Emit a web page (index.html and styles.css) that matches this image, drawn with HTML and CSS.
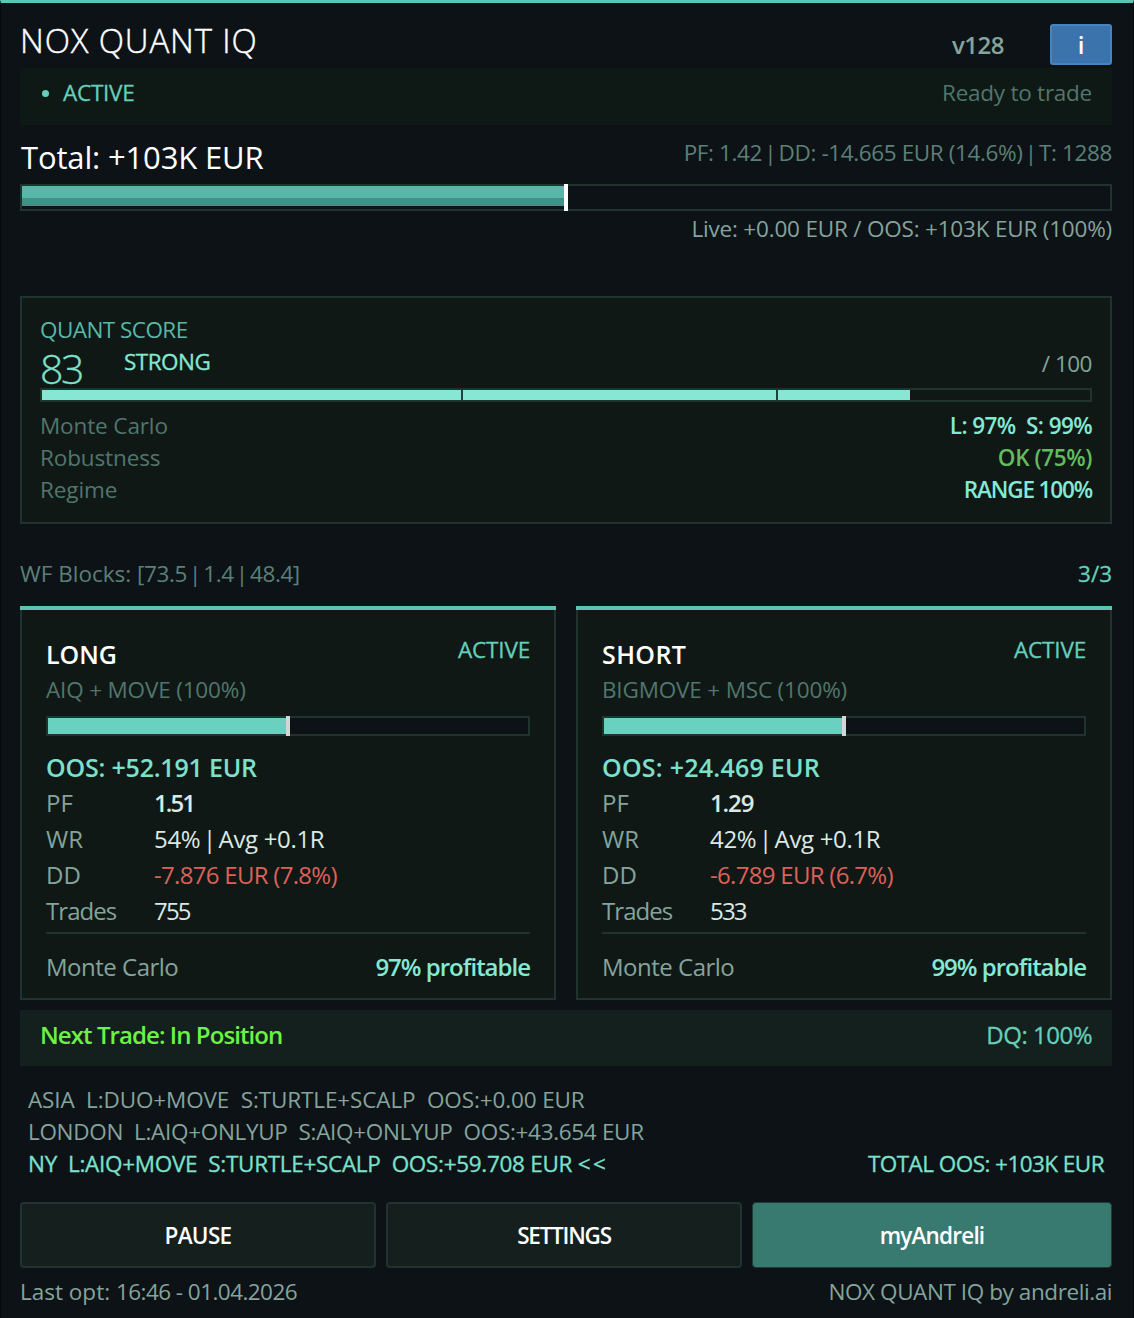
FILE: index.html
```html
<!DOCTYPE html>
<html lang="en">
<head>
    <meta charset="UTF-8">
    <meta name="viewport" content="width=device-width, initial-scale=1.0">
    <title>NOX QUANT IQ</title>
    <link rel="stylesheet" href="styles.css">
</head>
<body>
    <div class="panel">
        <header class="header">
            <h1 class="title">NOX QUANT IQ</h1>
            <span class="version">v128</span>
            <button type="button" class="info-button">i</button>
        </header>

        <div class="status">
            <span class="dot"></span>
            <span class="status-state">ACTIVE</span>
            <span class="status-note">Ready to trade</span>
        </div>

        <div class="total">
            <span class="total-value">Total: +103K EUR</span>
            <span class="total-stats">PF: 1.42<span class="sep"> | </span>DD: -14.665 EUR (14.6%)<span class="sep"> | </span>T: 1288</span>
        </div>
        <div class="bar total-bar">
            <div class="fill"></div>
            <div class="marker"></div>
        </div>
        <div class="live">Live: +0.00 EUR / OOS: +103K EUR (100%)</div>

        <section class="score">
            <h2 class="score-title">QUANT SCORE</h2>
            <div class="score-head">
                <span class="score-value">83</span>
                <span class="score-label">STRONG</span>
                <span class="score-max">/ 100</span>
            </div>
            <div class="bar score-bar">
                <div class="fill"></div>
                <i class="tick tick-40"></i>
                <i class="tick tick-70"></i>
            </div>
            <div class="score-row"><span class="label">Monte Carlo</span><span class="mc">L: 97%&nbsp; S: 99%</span></div>
            <div class="score-row"><span class="label">Robustness</span><span class="ok">OK (75%)</span></div>
            <div class="score-row"><span class="label">Regime</span><span class="regime">RANGE 100%</span></div>
        </section>

        <div class="blocks">
            <span>WF Blocks: <span class="blocks-list">[73.5<span class="sep"> | </span>1.4<span class="sep"> | </span>48.4]</span></span>
            <span class="blocks-count">3/3</span>
        </div>

        <div class="cards">
            <section class="card long">
                <div class="card-head">
                    <h2 class="card-title">LONG</h2>
                    <span class="card-state">ACTIVE</span>
                </div>
                <div class="strategy">AIQ + MOVE (100%)</div>
                <div class="bar card-bar">
                    <div class="fill"></div>
                    <div class="marker"></div>
                </div>
                <div class="oos">OOS: +52.191 EUR</div>
                <div class="stat"><span class="label">PF</span><span class="strong">1.51</span></div>
                <div class="stat"><span class="label">WR</span><span class="winrate">54%<span class="sep"> | </span>Avg +0.1R</span></div>
                <div class="stat"><span class="label">DD</span><span class="negative">-7.876 EUR (7.8%)</span></div>
                <div class="stat"><span class="label trades-label">Trades</span><span class="trades">755</span></div>
                <div class="card-foot"><span class="foot-label">Monte Carlo</span><span class="profitable">97% profitable</span></div>
            </section>

            <section class="card short">
                <div class="card-head">
                    <h2 class="card-title">SHORT</h2>
                    <span class="card-state">ACTIVE</span>
                </div>
                <div class="strategy">BIGMOVE + MSC (100%)</div>
                <div class="bar card-bar">
                    <div class="fill"></div>
                    <div class="marker"></div>
                </div>
                <div class="oos">OOS: +24.469 EUR</div>
                <div class="stat"><span class="label">PF</span><span class="strong">1.29</span></div>
                <div class="stat"><span class="label">WR</span><span class="winrate">42%<span class="sep"> | </span>Avg +0.1R</span></div>
                <div class="stat"><span class="label">DD</span><span class="negative">-6.789 EUR (6.7%)</span></div>
                <div class="stat"><span class="label trades-label">Trades</span><span class="trades">533</span></div>
                <div class="card-foot"><span class="foot-label">Monte Carlo</span><span class="profitable">99% profitable</span></div>
            </section>
        </div>

        <div class="next">
            <span class="next-trade">Next Trade: In Position</span>
            <span class="quality">DQ: 100%</span>
        </div>

        <div class="sessions">
            <div class="session asia">ASIA&nbsp; L:DUO+MOVE&nbsp; S:TURTLE+SCALP&nbsp; OOS:+0.00 EUR</div>
            <div class="session london">LONDON&nbsp; L:AIQ+ONLYUP&nbsp; S:AIQ+ONLYUP&nbsp; OOS:+43.654 EUR</div>
            <div class="session current">
                <span class="current-name">NY&nbsp; L:AIQ+MOVE&nbsp; S:TURTLE+SCALP&nbsp; OOS:+59.708 EUR <span class="arrows">&lt;&lt;</span></span>
                <span class="total-oos">TOTAL OOS: +103K EUR</span>
            </div>
        </div>

        <div class="buttons">
            <button type="button" class="button pause">PAUSE</button>
            <button type="button" class="button settings">SETTINGS</button>
            <button type="button" class="button primary">myAndreli</button>
        </div>

        <footer class="footer">
            <span>Last opt: <span class="last-opt">16:46 - 01.04.2026</span></span>
            <span class="credit">NOX QUANT IQ by andreli.ai</span>
        </footer>
    </div>
</body>
</html>
```

FILE: styles.css
```css
* {
    box-sizing: border-box;
}
body {
    margin: 0;
    background-color: #0d1216;
    font-family: "Segoe UI", "Open Sans", sans-serif;
    font-size: 22.5px;
    line-height: 32px;
    color: #84a49c;
    white-space: nowrap;
}
h1, h2 {
    margin: 0;
    font-weight: 400;
}
button {
    font-family: inherit;
    padding: 0;
    cursor: pointer;
}
.panel {
    height: 1318px;
    padding: 0 21px 0 19px;
    border: 1px solid #07090b;
    border-top: 3px solid #5cc4b3;
    border-bottom: 0;
    overflow: hidden;
}
/* narrow pipe between values */
.sep {
    word-spacing: -3.2px;
}

/* header */
.header {
    display: flex;
    height: 65px;
}
.title {
    margin-top: 18px;
    font-size: 33px;
    font-weight: 300;
    line-height: 40px;
    color: #fff;
    letter-spacing: 0.85px;
    -webkit-text-stroke: 0.4px #fff;
}
.version {
    margin: 26px 46px 0 auto;
    font-size: 24px;
    font-weight: 600;
    letter-spacing: -0.5px;
}
.info-button {
    width: 62px;
    height: 41px;
    margin-top: 21px;
    border: 2px solid #4785c0;
    border-radius: 3px;
    background-color: #3b73ac;
    color: #fff;
    font-size: 24px;
    font-weight: 600;
    line-height: 36px;
}
.status {
    display: flex;
    height: 57px;
    padding: 9px 20px 0 21px;
    background-color: #0e1815;
    color: #65cfbc;
}
.dot {
    width: 7px;
    height: 7px;
    margin: 13px 14px 0 1px;
    border-radius: 50%;
    background-color: #65cfbc;
}
.status-state {
    letter-spacing: -0.25px;
    -webkit-text-stroke: 0.3px #65cfbc;
}
.status-note {
    margin-left: auto;
    color: #51766c;
    letter-spacing: -0.25px;
}

/* total result */
.total {
    display: flex;
    justify-content: space-between;
    height: 59px;
}
.total-value {
    padding: 12px 0 0 1px;
    font-size: 31px;
    line-height: 40px;
    color: #fff;
    letter-spacing: -0.15px;
}
.total-stats {
    padding-top: 12px;
    color: #5b8077;
    letter-spacing: -0.38px;
}
.bar {
    position: relative;
    border: 2px solid #20332f;
    background-color: #0d1216;
}
.fill {
    height: 100%;
}
.marker {
    position: absolute;
    top: -2px;
    bottom: -2px;
    left: 50%;
    width: 4px;
    margin-left: -2px;
    background-color: #fff;
}
.total-bar {
    height: 27px;
    padding-bottom: 3px;
}
.total-bar .fill {
    width: 50%;
    background: linear-gradient(#57b7a8 60%, #419085 60%);
}
.live {
    height: 85px;
    padding-top: 2px;
    text-align: right;
    letter-spacing: -0.2px;
}

/* quant score */
.score {
    height: 228px;
    padding: 16px 18px 0;
    border: 2px solid #20332f;
    background-color: #101816;
}
.score-title {
    font-size: 22.5px;
    line-height: 32px;
    color: #56b9a8;
    letter-spacing: -0.55px;
}
.score-head {
    display: flex;
    height: 42px;
}
.score-value {
    width: 84px;
    font-size: 41px;
    font-weight: 300;
    line-height: 44px;
    color: #7de0cd;
    letter-spacing: -2.5px;
    -webkit-text-stroke: 0.3px #7de0cd;
}
.score-label {
    color: #84e8d3;
    letter-spacing: -0.5px;
    -webkit-text-stroke: 0.3px #84e8d3;
}
.score-max {
    margin: 2px 0 0 auto;
    letter-spacing: -0.5px;
}
.score-bar {
    height: 14px;
    margin-bottom: 8px;
    background-color: #101816;
}
.score-bar .fill {
    width: 82.8%;
    background-color: #86e8d4;
}
.tick {
    position: absolute;
    top: 0;
    bottom: 0;
    width: 2px;
    background-color: #20433c;
}
.tick-40 { left: 40%; }
.tick-70 { left: 70%; }
.score-row {
    display: flex;
    justify-content: space-between;
    color: #84e8d3;
    font-weight: 600;
}
.score-row .label {
    color: #51766c;
    font-weight: 400;
    letter-spacing: -0.12px;
}
.mc { letter-spacing: -0.6px; }
.ok {
    color: #63bb5f;
    letter-spacing: -0.4px;
}
.regime { letter-spacing: -1.15px; }

.blocks {
    display: flex;
    justify-content: space-between;
    height: 82px;
    padding-top: 34px;
    color: #5b8077;
}
.blocks-list {
    letter-spacing: -0.42px;
}
.blocks-count {
    color: #65cfbc;
    -webkit-text-stroke: 0.3px #65cfbc;
}

/* long / short cards */
.cards {
    display: grid;
    grid-template-columns: 1fr 1fr;
    gap: 20px;
}
.card {
    height: 394px;
    padding: 0 24px;
    border: 2px solid #20332f;
    border-top: 0;
    background-color: #101816;
    font-size: 24px;
    line-height: 36px;
}
/* accent line across the full card width */
.card::before {
    content: "";
    display: block;
    position: relative;
    height: 4px;
    margin: 0 -26px 24px;
    background-color: #5cc4b3;
}
.card-head {
    display: flex;
    justify-content: space-between;
    height: 38px;
}
.card-title {
    padding-top: 2px;
    font-size: 25px;
    font-weight: 600;
    line-height: 36px;
    color: #fff;
}
.card-state {
    font-size: 22.5px;
    line-height: 32px;
    color: #65cfbc;
    letter-spacing: -0.15px;
    -webkit-text-stroke: 0.3px #65cfbc;
}
.strategy {
    height: 44px;
    padding-top: 1px;
    font-size: 22.5px;
    line-height: 34px;
    color: #51766c;
    letter-spacing: -0.17px;
}
.card-bar {
    height: 20px;
    margin-bottom: 13px;
}
.card-bar .fill {
    width: 50%;
    background-color: #6ad1c0;
}
.card-bar .marker {
    background-color: #d2d7d6;
}
.oos {
    font-size: 25px;
    font-weight: 600;
    color: #7ce0cc;
}
.stat {
    display: flex;
    color: #dbe9e5;
    letter-spacing: -0.7px;
}
.stat .label {
    width: 108px;
    color: #84a49c;
    letter-spacing: 0;
}
.stat .trades-label { letter-spacing: -0.95px; }
.strong { font-weight: 600; }
.winrate { letter-spacing: -0.33px; }
.negative { color: #db6259; }
.trades { letter-spacing: -1.8px; }
.long .oos { letter-spacing: -0.2px; }
.long .strong { letter-spacing: -1.9px; }
.short .card-title { letter-spacing: 0.4px; }
.short .oos { letter-spacing: 0.25px; }
.short .strong { letter-spacing: -1.1px; }
.card-foot {
    display: flex;
    justify-content: space-between;
    margin-top: 3px;
    padding-top: 15px;
    border-top: 2px solid #20332f;
}
.foot-label { letter-spacing: -0.5px; }
.profitable {
    color: #84e8d3;
    font-weight: 600;
    letter-spacing: -1px;
}

/* next trade */
.next {
    display: flex;
    justify-content: space-between;
    height: 56px;
    margin-top: 10px;
    padding: 7px 20px 0;
    background-color: #14201e;
    font-size: 24px;
    line-height: 36px;
}
.next-trade {
    color: #6cf244;
    font-weight: 600;
    letter-spacing: -0.93px;
}
.quality {
    color: #65cfbc;
    letter-spacing: -0.5px;
    -webkit-text-stroke: 0.3px #65cfbc;
}

/* sessions */
.sessions {
    height: 136px;
    padding: 18px 8px 0;
}
.asia { letter-spacing: -0.12px; }
.london { letter-spacing: -0.32px; }
.current {
    display: flex;
    justify-content: space-between;
    color: #7ce0cc;
    -webkit-text-stroke: 0.3px #7ce0cc;
}
.current-name { letter-spacing: -0.3px; }
.arrows { letter-spacing: 2.5px; }
.total-oos { letter-spacing: -0.55px; }

/* actions */
.buttons {
    display: grid;
    grid-template-columns: 356px 356px 360px;
    column-gap: 10px;
    height: 66px;
}
.button {
    border: 2px solid #20332f;
    border-radius: 4px;
    background-color: #151f1d;
    color: #fff;
    font-size: 22.5px;
    font-weight: 600;
}
.pause { letter-spacing: -0.7px; }
.settings { letter-spacing: -1.25px; }
.primary {
    border: 1px solid #1c3d38;
    background-color: #387a70;
    letter-spacing: -0.8px;
}
.footer {
    display: flex;
    justify-content: space-between;
    padding-top: 8px;
}
.last-opt { letter-spacing: -0.55px; }
.credit { letter-spacing: -0.42px; }
```
